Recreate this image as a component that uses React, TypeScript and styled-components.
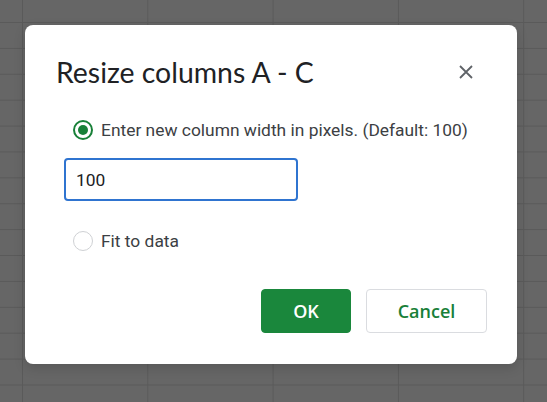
import React from "react";
import styled, { createGlobalStyle } from "styled-components";

const GlobalStyle = createGlobalStyle`
  html, body {
    margin: 0;
    padding: 0;
    width: 100%;
    height: 100%;
  }
  body {
    font-family: Roboto, "Liberation Sans", sans-serif;
  }
  #root {
    height: 100%;
  }
`;

const Backdrop = styled.div`
  box-sizing: border-box;
  width: 547px;
  height: 402px;
  overflow: hidden;
  padding: 25px 0 0 25px;
  background-color: #666666;
  background-image:
    linear-gradient(to bottom, #5a5a5a 1px, transparent 1px),
    linear-gradient(to right, #5a5a5a 1px, transparent 1px);
  background-size: 100% 25.9px, 125.3px 100%;
  background-position: 0 22px, 22px 0;
`;

const Dialog = styled.div`
  box-sizing: border-box;
  width: 492px;
  background: #ffffff;
  border-radius: 8px;
  padding: 27px 30px 30px 30px;
  display: flex;
  flex-direction: column;
  box-shadow: 0 4px 12px rgba(0, 0, 0, 0.15);
`;

const Header = styled.div`
  display: flex;
  align-items: center;
  justify-content: space-between;
  height: 40px;
`;

const Title = styled.h2`
  margin: 0 0 0 1px;
  font-family: Lato, "Open Sans", sans-serif;
  font-weight: 400;
  font-size: 28.4px;
  line-height: 40px;
  color: #202124;
`;

const CloseButton = styled.button`
  width: 40px;
  height: 40px;
  margin-right: 1px;
  border: none;
  background: transparent;
  padding: 0;
  display: flex;
  align-items: center;
  justify-content: center;
  cursor: pointer;
`;

const Options = styled.div`
  display: flex;
  flex-direction: column;
  margin-top: 26px;
`;

const RadioRow = styled.label<{ $gapTop?: number }>`
  display: flex;
  align-items: center;
  gap: 8px;
  height: 24px;
  margin-left: 18px;
  margin-top: ${(p) => p.$gapTop ?? 0}px;
  font-size: 17.4px;
  color: #3c4043;
  cursor: pointer;
`;

const RadioCircle = styled.span<{ $checked?: boolean }>`
  box-sizing: border-box;
  width: 20px;
  height: 20px;
  border-radius: 50%;
  border: ${(p) => (p.$checked ? "2px solid #188038" : "1px solid #cfd1d4")};
  display: flex;
  align-items: center;
  justify-content: center;
  flex-shrink: 0;
  &::after {
    content: "";
    display: ${(p) => (p.$checked ? "block" : "none")};
    width: 10px;
    height: 10px;
    border-radius: 50%;
    background: #188038;
  }
`;

const WidthInput = styled.input`
  box-sizing: border-box;
  margin: 16px 0 0 9px;
  width: 234px;
  height: 43px;
  border: 2px solid #2f74d0;
  border-radius: 4px;
  padding: 0 10px;
  font-family: Roboto, "Liberation Sans", sans-serif;
  font-size: 17.4px;
  color: #202124;
  outline: none;
`;

const Actions = styled.div`
  display: flex;
  justify-content: flex-end;
  gap: 15px;
  margin-top: 36px;
  margin-bottom: 1px;
`;

const Button = styled.button<{ $primary?: boolean; $width: number }>`
  box-sizing: border-box;
  width: ${(p) => p.$width}px;
  height: 44px;
  border-radius: 4px;
  border: 1px solid ${(p) => (p.$primary ? "#1a873c" : "#dadce0")};
  background: ${(p) => (p.$primary ? "#1a873c" : "#ffffff")};
  color: ${(p) => (p.$primary ? "#ffffff" : "#188038")};
  font-family: "Open Sans", Lato, sans-serif;
  font-weight: 600;
  font-size: 18px;
  cursor: pointer;
`;

export default function App() {
  return (
    <>
      <GlobalStyle />
      <Backdrop>
        <Dialog>
          <Header>
            <Title>Resize columns A - C</Title>
            <CloseButton aria-label="Close">
              <svg width="14" height="14" viewBox="0 0 14 14">
                <path
                  d="M1 1 L13 13 M13 1 L1 13"
                  stroke="#5f6368"
                  strokeWidth="1.8"
                  fill="none"
                />
              </svg>
            </CloseButton>
          </Header>
          <Options>
            <RadioRow>
              <RadioCircle $checked />
              Enter new column width in pixels. (Default: 100)
            </RadioRow>
            <WidthInput defaultValue="100" />
            <RadioRow $gapTop={28}>
              <RadioCircle />
              Fit to data
            </RadioRow>
          </Options>
          <Actions>
            <Button $primary $width={90}>OK</Button>
            <Button $width={121}>Cancel</Button>
          </Actions>
        </Dialog>
      </Backdrop>
    </>
  );
}
